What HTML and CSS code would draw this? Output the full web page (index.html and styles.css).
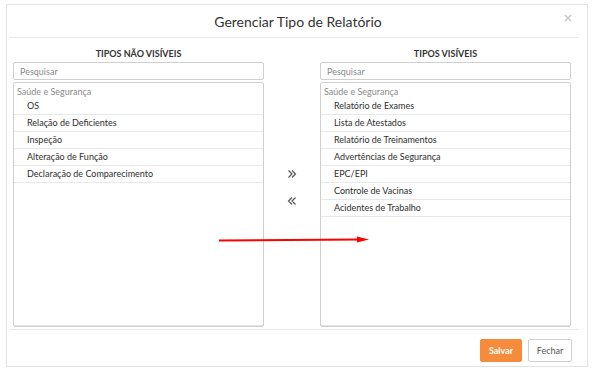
FILE: index.html
```html
<!DOCTYPE html>
<html lang="pt">
<head>
<meta charset="utf-8">
<title>Gerenciar Tipo de Relatório</title>
<link rel="stylesheet" href="styles.css">
</head>
<body>
<div class="modal">
  <div class="modal-header">
    <h4 class="modal-title">Gerenciar Tipo de Relatório</h4>
    <span class="close"><svg width="8" height="8" viewBox="0 0 8 8"><path d="M1 1L7 7M7 1L1 7" stroke="#c4c4c4" stroke-width="1.3" fill="none"/></svg></span>
  </div>
  <div class="modal-body">
    <div class="panel">
      <div class="panel-title">TIPOS NÃO VISÍVEIS</div>
      <input class="search" type="text" placeholder="Pesquisar">
      <div class="list">
        <div class="group">Saúde e Segurança</div>
        <div class="item">OS</div>
        <div class="item">Relação de Deficientes</div>
        <div class="item">Inspeção</div>
        <div class="item">Alteração de Função</div>
        <div class="item">Declaração de Comparecimento</div>
      </div>
    </div>
    <div class="mover">
      <span class="move"><svg width="10" height="10" viewBox="0 0 10 10"><path d="M1.5 1.5L5 5L1.5 8.5M5 1.5L8.5 5L5 8.5" stroke="#555" stroke-width="1.2" fill="none"/></svg></span>
      <span class="move"><svg width="10" height="10" viewBox="0 0 10 10"><path d="M8.5 1.5L5 5L8.5 8.5M5 1.5L1.5 5L5 8.5" stroke="#555" stroke-width="1.2" fill="none"/></svg></span>
    </div>
    <div class="panel">
      <div class="panel-title">TIPOS VISÍVEIS</div>
      <input class="search" type="text" placeholder="Pesquisar">
      <div class="list">
        <div class="group">Saúde e Segurança</div>
        <div class="item">Relatório de Exames</div>
        <div class="item">Lista de Atestados</div>
        <div class="item">Relatório de Treinamentos</div>
        <div class="item">Advertências de Segurança</div>
        <div class="item">EPC/EPI</div>
        <div class="item">Controle de Vacinas</div>
        <div class="item">Acidentes de Trabalho</div>
      </div>
    </div>
  </div>
  <div class="modal-footer">
    <button class="btn btn-primary">Salvar</button>
    <button class="btn btn-default">Fechar</button>
  </div>
</div>
<svg class="annotation" width="160" height="10" viewBox="0 0 160 10"><path d="M0 5.5L140 4.5" stroke="#ff0000" stroke-width="2" fill="none"/><path d="M138 1.5L150 4.5L138 7.5Z" fill="#ff0000"/></svg>
</body>
</html>
```
FILE: styles.css
```css
html, body {
  margin: 0;
  padding: 0;
  background: #fff;
}
body {
  position: relative;
  width: 595px;
  height: 378px;
  font-family: Lato, "Open Sans", sans-serif;
  color: #333;
}
.modal {
  margin: 4px 0 0 6px;
  width: 580px;
  border: 1px solid #e3e3e3;
  box-sizing: content-box;
}
.modal-header {
  position: relative;
  height: 32px;
  margin: 0 8px 0 2px;
  border-bottom: 1px solid #e8e8e8;
  display: flex;
  align-items: center;
  justify-content: center;
}
.modal-title {
  margin: 0;
  padding-left: 8px;
  font-size: 14px;
  font-weight: 400;
  color: #333;
}
.close {
  position: absolute;
  right: 7px;
  top: 9px;
  display: flex;
}
.modal-body {
  display: grid;
  grid-template-columns: 251px 56px 251px;
  padding: 10px 0 2px 6px;
}
.panel {
  display: flex;
  flex-direction: column;
}
.panel-title {
  height: 12px;
  line-height: 12px;
  font-size: 9px;
  font-weight: 700;
  text-align: center;
  color: #333;
  margin-bottom: 2px;
}
.search {
  box-sizing: border-box;
  height: 18px;
  margin: 0 0 2px;
  padding: 0 6px;
  border: 1px solid #cfcfcf;
  border-radius: 2px;
  font-family: inherit;
  font-size: 9px;
  color: #555;
  outline: none;
}
.search::placeholder {
  color: #8a8a8a;
}
.list {
  box-sizing: border-box;
  height: 245px;
  border: 1px solid #cfcfcf;
  border-radius: 2px;
  box-shadow: inset 0 -1px 0 #e6e6e6;
}
.group {
  padding: 2px 0 0 3px;
  height: 13px;
  line-height: 13px;
  font-size: 9px;
  color: #8a8a8a;
}
.item {
  height: 16px;
  line-height: 16px;
  padding-left: 13px;
  border-bottom: 1px solid #e8e8e8;
  font-size: 9px;
  color: #2e2e2e;
}
.mover {
  display: flex;
  flex-direction: column;
  align-items: center;
  padding-top: 121px;
  gap: 17px;
}
.move {
  display: flex;
  width: 10px;
  height: 10px;
}
.modal-footer {
  margin: 0 9px 0 2px;
  border-top: 1px solid #e8e8e8;
  height: 37px;
  display: flex;
  justify-content: flex-end;
  align-items: flex-start;
  gap: 6px;
  padding: 9px 6px 0 0;
  box-sizing: border-box;
}
.btn {
  height: 23px;
  box-sizing: border-box;
  border-radius: 2px;
  font-family: inherit;
  font-size: 9px;
  padding: 0;
  cursor: pointer;
}
.btn-primary {
  width: 42px;
  background: #f68b3c;
  border: 1px solid #f68b3c;
  color: #fff;
  font-weight: 700;
}
.btn-default {
  width: 44px;
  background: #fff;
  border: 1px solid #d0d0d0;
  color: #555;
}
.annotation {
  position: absolute;
  left: 219px;
  top: 235px;
}
```
